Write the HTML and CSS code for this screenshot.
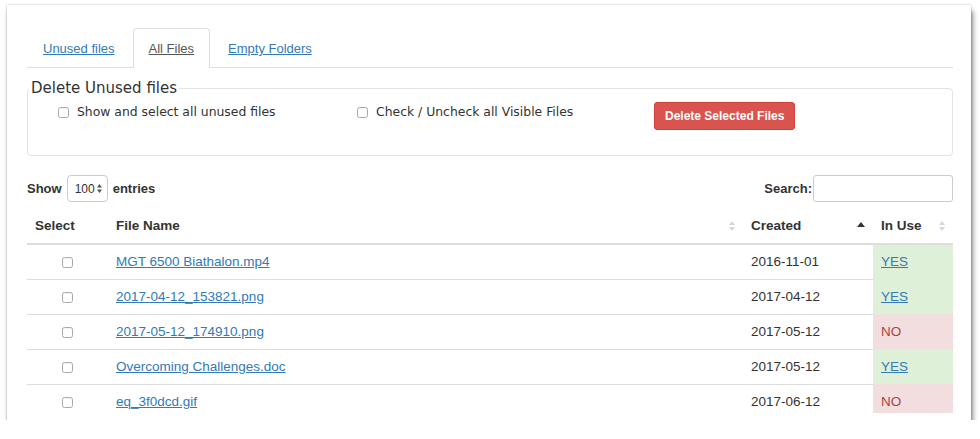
FILE: index.html
```html
<!DOCTYPE html>
<html lang="en">
<head>
<meta charset="utf-8">
<title>Unused files</title>
<link rel="stylesheet" href="styles.css">
</head>
<body>
<div class="card">
  <ul class="tabs">
    <li class="tab"><a href="#">Unused files</a></li>
    <li class="tab active"><a href="#">All Files</a></li>
    <li class="tab"><a href="#">Empty Folders</a></li>
  </ul>

  <fieldset class="panel">
    <legend>Delete Unused files</legend>
    <div class="panel-row">
      <label class="opt opt-1"><input type="checkbox" class="cb">Show and select all unused files</label>
      <label class="opt opt-2"><input type="checkbox" class="cb">Check / Uncheck all Visible Files</label>
      <button class="btn-danger" type="button">Delete Selected Files</button>
    </div>
  </fieldset>

  <div class="controls">
    <div class="length">Show <span class="select">100<svg class="spin" width="5" height="9" viewBox="0 0 5 9"><path d="M2.5 0 L5 3.5 H0 Z M2.5 9 L0 5.5 H5 Z" fill="#555"/></svg></span> entries</div>
    <div class="search">Search:<span class="search-input"></span></div>
  </div>

  <div class="table-wrap">
    <table class="files">
      <colgroup>
        <col class="c-select"><col class="c-name"><col class="c-created"><col class="c-use">
      </colgroup>
      <thead>
        <tr>
          <th>Select</th>
          <th><div class="th-inner"><span>File Name</span><svg class="sort" width="6" height="10" viewBox="0 0 6 10"><path d="M3 0 L6 4 H0 Z M3 10 L0 6 H6 Z" fill="#d6d6d6"/></svg></div></th>
          <th><div class="th-inner"><span>Created</span><svg class="sort-asc" width="8" height="5" viewBox="0 0 8 5"><path d="M4 0 L8 5 H0 Z" fill="#333"/></svg></div></th>
          <th><div class="th-inner"><span>In Use</span><svg class="sort" width="6" height="10" viewBox="0 0 6 10"><path d="M3 0 L6 4 H0 Z M3 10 L0 6 H6 Z" fill="#d6d6d6"/></svg></div></th>
        </tr>
      </thead>
      <tbody>
        <tr>
          <td class="sel"><input type="checkbox" class="cb"></td>
          <td><a href="#">MGT 6500 Biathalon.mp4</a></td>
          <td>2016-11-01</td>
          <td class="yes"><a href="#">YES</a></td>
        </tr>
        <tr>
          <td class="sel"><input type="checkbox" class="cb"></td>
          <td><a href="#">2017-04-12_153821.png</a></td>
          <td>2017-04-12</td>
          <td class="yes"><a href="#">YES</a></td>
        </tr>
        <tr>
          <td class="sel"><input type="checkbox" class="cb"></td>
          <td><a href="#">2017-05-12_174910.png</a></td>
          <td>2017-05-12</td>
          <td class="no">NO</td>
        </tr>
        <tr>
          <td class="sel"><input type="checkbox" class="cb"></td>
          <td><a href="#">Overcoming Challenges.doc</a></td>
          <td>2017-05-12</td>
          <td class="yes"><a href="#">YES</a></td>
        </tr>
        <tr>
          <td class="sel"><input type="checkbox" class="cb"></td>
          <td><a href="#">eq_3f0dcd.gif</a></td>
          <td>2017-06-12</td>
          <td class="no">NO</td>
        </tr>
      </tbody>
    </table>
  </div>
</div>
</body>
</html>
```

FILE: styles.css
```css
* {
  box-sizing: border-box;
}

body {
  margin: 0;
  background: #fff;
  font-family: "Liberation Sans", Arial, sans-serif;
  font-size: 13.4px;
  color: #333;
}

.card {
  margin: 5px 0 0 7px;
  width: 964px;
  height: 415px;
  background: #fff;
  padding: 23px 18px 7px 20px;
  display: flex;
  flex-direction: column;
  box-shadow: 0 0 2px rgba(0, 0, 0, 0.3), 2px 6px 5px rgba(0, 0, 0, 0.45);
}

/* Tabs */
.tabs {
  list-style: none;
  margin: 0;
  padding: 0;
  display: flex;
  border-bottom: 1px solid #ddd;
  flex: none;
  font-size: 13px;
}

.tab {
  margin-right: 2px;
  margin-bottom: -1px;
}

.tab a {
  display: block;
  padding: 10px 15px 10px 15px;
  line-height: 19px;
  height: 40px;
  border: 1px solid transparent;
  border-radius: 4px 4px 0 0;
  color: #337ab7;
  text-decoration: underline;
}

.tab.active a {
  color: #555;
  background: #fff;
  border-color: #ddd #ddd transparent;
}

/* Fieldset panel */
.panel {
  flex: none;
  margin: 11px 0 0;
  padding: 0 0 0 1px;
  border: 1px solid #e3e3e3;
  border-radius: 4px;
  min-width: 0;
  font-family: "DejaVu Sans", Verdana, sans-serif;
}

.panel legend {
  padding: 0 2px;
  font-size: 15px;
  line-height: 19px;
  color: #333;
}

.panel-row {
  display: flex;
  align-items: flex-start;
  height: 57px;
  padding-left: 29px;
}

.opt {
  display: flex;
  align-items: center;
  font-size: 12.4px;
  line-height: 18px;
  margin-top: 5px;
  color: #333;
}

.opt .cb {
  margin-right: 8px;
}

.opt-1 {
  width: 299px;
}

.opt-2 {
  width: 297px;
}

.btn-danger {
  margin-top: 4px;
  height: 28px;
  padding: 0 10px;
  font-family: "Liberation Sans", Arial, sans-serif;
  font-size: 12px;
  font-weight: bold;
  color: #fff;
  background: #d9534f;
  border: 1px solid #d43f3a;
  border-radius: 3px;
}

.cb {
  -webkit-appearance: none;
  appearance: none;
  display: block;
  width: 11px;
  height: 11px;
  margin: 0;
  background: #fff;
  border: 1px solid #a9a9a9;
  border-radius: 2.5px;
  box-shadow: inset 0 1px 1px rgba(0, 0, 0, 0.06);
}

/* Length / search controls */
.controls {
  flex: none;
  margin-top: 19px;
  height: 27px;
  display: flex;
  justify-content: space-between;
  align-items: center;
  font-size: 13px;
  font-weight: bold;
}

.length,
.search {
  display: flex;
  align-items: center;
}

.select {
  display: inline-flex;
  align-items: center;
  justify-content: space-between;
  width: 41px;
  height: 27px;
  margin: 0 5px 0 5px;
  padding: 0 5px 0 7px;
  border: 1px solid #ccc;
  border-radius: 4px;
  font-size: 12px;
  font-weight: normal;
  color: #333;
}

.search-input {
  display: block;
  width: 140px;
  height: 27px;
  margin-left: 1px;
  border: 1px solid #ccc;
  border-radius: 3px;
}

/* Table */
.table-wrap {
  flex: 1;
  min-height: 0;
  overflow: hidden;
  margin-top: 7px;
}

.files {
  width: 100%;
  table-layout: fixed;
  border-collapse: separate;
  border-spacing: 0;
  font-size: 13.5px;
}

.c-select { width: 81px; }
.c-name { width: 635px; }
.c-created { width: 130px; }
.c-use { width: 80px; }

.files th {
  text-align: left;
  padding: 8px;
  line-height: 18px;
  font-weight: bold;
  border-bottom: 2px solid #ddd;
}

.th-inner {
  display: flex;
  justify-content: space-between;
  align-items: center;
}

.sort {
  margin-top: -1px;
}

.sort-asc {
  margin-top: -4px;
}

.files td {
  padding: 8px;
  line-height: 18px;
  border-top: 1px solid #ddd;
}

.files tbody tr:first-child td {
  border-top: 0;
}

.files a {
  color: #337ab7;
  text-decoration: underline;
}

.files td.sel .cb {
  margin: 4px auto 3px;
}

.files td.yes {
  background: #dff0d8;
  border-top-color: #dff0d8;
}

.files td.no {
  background: #f2dede;
  border-top-color: #f2dede;
  color: #a94442;
}
```
